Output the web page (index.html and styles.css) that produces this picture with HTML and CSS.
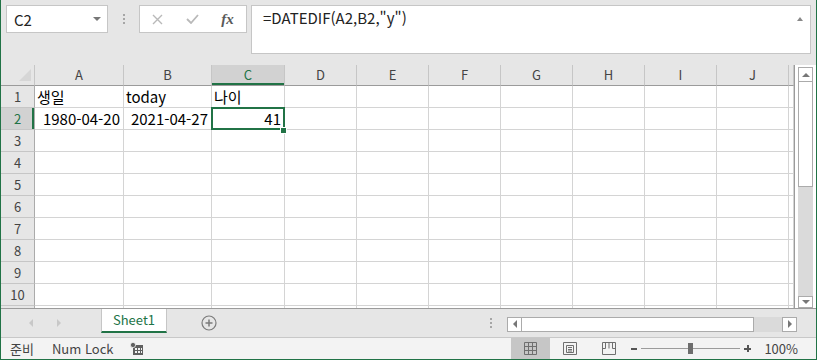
FILE: index.html
```html
<!DOCTYPE html>
<html lang="ko">
  <head>
    <meta charset="UTF-8" />
    <meta name="viewport" content="width=device-width, initial-scale=1.0" />
    <title>통합 문서 - DATEDIF</title>

    <link rel="stylesheet" href="styles.css">
  </head>
  <body>
    <div class="app">
      <!-- 이름 상자 + 수식 입력줄 -->
      <div class="toolbar">
        <div class="namebox"><span>C2</span><i class="caret-down"></i></div>
        <div class="grip"><b></b><b></b><b></b></div>
        <div class="fxbox">
          <span class="fxbtn">
            <svg width="11" height="11" viewBox="0 0 11 11"><path d="M1 1L10 10M10 1L1 10" stroke="#b9b9b9" stroke-width="1.4" fill="none"/></svg>
          </span>
          <span class="fxbtn">
            <svg width="13" height="10" viewBox="0 0 13 10"><path d="M1 5L5 9L12 1" stroke="#b9b9b9" stroke-width="1.8" fill="none"/></svg>
          </span>
          <span class="fxbtn fx">fx</span>
        </div>
        <div class="formula"><span>=DATEDIF(A2,B2,"y")</span><i class="caret-up"></i></div>
      </div>

      <!-- 워크시트 -->
      <div class="sheet">
        <div class="grid-wrap">
          <table class="grid">
            <colgroup>
              <col style="width:34px"><col style="width:89px"><col style="width:88px"><col style="width:73px">
              <col style="width:72px"><col style="width:72px"><col style="width:72px"><col style="width:72px">
              <col style="width:72px"><col style="width:72px"><col style="width:72px"><col style="width:5px">
            </colgroup>
            <tr class="head">
              <th class="corner"><svg width="13" height="13" viewBox="0 0 13 13"><path d="M12 0V12H0Z" fill="#d6d6d6"/></svg></th>
              <th>A</th><th>B</th><th class="sel-col">C</th><th>D</th><th>E</th><th>F</th><th>G</th><th>H</th><th>I</th><th>J</th><th></th>
            </tr>
            <tr><th>1</th><td class="kr">생일</td><td>today</td><td class="kr">나이</td><td></td><td></td><td></td><td></td><td></td><td></td><td></td><td></td></tr>
            <tr><th class="sel-row">2</th><td class="num">1980-04-20</td><td class="num">2021-04-27</td><td class="num sel">41</td><td></td><td></td><td></td><td></td><td></td><td></td><td></td><td></td></tr>
            <tr><th>3</th><td></td><td></td><td></td><td></td><td></td><td></td><td></td><td></td><td></td><td></td><td></td></tr>
            <tr><th>4</th><td></td><td></td><td></td><td></td><td></td><td></td><td></td><td></td><td></td><td></td><td></td></tr>
            <tr><th>5</th><td></td><td></td><td></td><td></td><td></td><td></td><td></td><td></td><td></td><td></td><td></td></tr>
            <tr><th>6</th><td></td><td></td><td></td><td></td><td></td><td></td><td></td><td></td><td></td><td></td><td></td></tr>
            <tr><th>7</th><td></td><td></td><td></td><td></td><td></td><td></td><td></td><td></td><td></td><td></td><td></td></tr>
            <tr><th>8</th><td></td><td></td><td></td><td></td><td></td><td></td><td></td><td></td><td></td><td></td><td></td></tr>
            <tr><th>9</th><td></td><td></td><td></td><td></td><td></td><td></td><td></td><td></td><td></td><td></td><td></td></tr>
            <tr><th>10</th><td></td><td></td><td></td><td></td><td></td><td></td><td></td><td></td><td></td><td></td><td></td></tr>
            <tr><th></th><td></td><td></td><td></td><td></td><td></td><td></td><td></td><td></td><td></td><td></td><td></td></tr>
          </table>
        </div>
        <div class="vscroll">
          <div class="sbtn"><i class="tri-up"></i></div>
          <div class="vthumb"></div>
          <div class="vtrack"></div>
          <div class="sbtn sbtn-bottom"><i class="tri-down"></i></div>
        </div>
      </div>

      <!-- 시트 탭 -->
      <div class="tabbar">
        <i class="nav nav-left"></i>
        <i class="nav nav-right"></i>
        <div class="tab">Sheet1</div>
        <svg class="addsheet" width="16" height="16" viewBox="0 0 16 16">
          <circle cx="8" cy="8" r="7" stroke="#7b7b7b" stroke-width="1.2" fill="none"/>
          <path d="M4.5 8H11.5M8 4.5V11.5" stroke="#7b7b7b" stroke-width="1.5"/>
        </svg>
        <div class="grip hgrip"><b></b><b></b><b></b></div>
        <div class="hscroll">
          <div class="sbtn"><i class="tri-left"></i></div>
          <div class="hthumb"></div>
          <div class="htrack"></div>
          <div class="sbtn"><i class="tri-right"></i></div>
        </div>
      </div>

      <!-- 상태 표시줄 -->
      <div class="status">
        <span class="ready">준비</span>
        <span class="numlock">Num Lock</span>
        <svg class="macro" width="13" height="13" viewBox="0 0 13 13">
          <rect x="3" y="3" width="10" height="10" fill="#5f5f5f"/>
          <path d="M5 6H7V8H5ZM8 6H10V8H8ZM5 9H7V11H5ZM8 9H10V11H8ZM11 6H12V8H11ZM11 9H12V11H11Z" fill="#f3f3f3"/>
          <circle cx="3" cy="3" r="2.6" fill="#5f5f5f" stroke="#f3f3f3" stroke-width="0.8"/>
        </svg>
        <div class="views">
          <span class="view active">
            <svg width="13" height="13" viewBox="0 0 13 13"><path d="M0.5 0.5H12.5V12.5H0.5ZM4.5 0.5V12.5M8.5 0.5V12.5M0.5 4.5H12.5M0.5 8.5H12.5" stroke="#6f6f6f" fill="none"/></svg>
          </span>
          <span class="view">
            <svg width="14" height="13" viewBox="0 0 14 13"><path d="M0.5 0.5H13.5V12.5H0.5ZM3.5 3.5H10.5V10.5H3.5ZM5 5.5H9M5 7.5H9M5 9H9" stroke="#6f6f6f" fill="none"/></svg>
          </span>
          <span class="view">
            <svg width="14" height="13" viewBox="0 0 14 13"><path d="M0.5 0.5H13.5V12.5H0.5ZM7 0.5V6.5M0.5 6.5H3.5V0.5M13.5 6.5H10.5V0.5" stroke="#6f6f6f" fill="none"/></svg>
          </span>
        </div>
        <span class="zminus"></span>
        <div class="ztrack"><span class="zthumb"></span></div>
        <span class="zplus"></span>
        <span class="zpct">100%</span>
      </div>
    </div>
  </body>
</html>
```

FILE: styles.css
```css
/* 기본 */
body {
  margin: 0;
  background-color: #fff;
  font-family: "Noto Sans CJK KR", "Noto Sans", sans-serif;
  color: #222;
}

/* 창 전체, 녹색 테두리 */
.app {
  width: 817px;
  height: 360px;
  box-sizing: border-box;
  border: 1px solid #217346;
  border-top: 0;
  display: flex;
  flex-direction: column;
  overflow: hidden;
}

/* 이름 상자 + 수식 입력줄 */
.toolbar {
  flex: none;
  height: 65px;
  box-sizing: border-box;
  padding: 5px 0 0 5px;
  background-color: #e6e6e6;
  display: flex;
  align-items: flex-start;
}

.namebox {
  width: 102px;
  height: 28px;
  box-sizing: border-box;
  padding: 0 6px 0 7px;
  background-color: #fff;
  border: 1px solid #c6c6c6;
  display: flex;
  align-items: center;
  justify-content: space-between;
  font-size: 15px;
}

.caret-down {
  border-left: 4px solid transparent;
  border-right: 4px solid transparent;
  border-top: 4px solid #777;
}

.grip {
  width: 31px;
  padding-top: 9px;
  display: flex;
  flex-direction: column;
  align-items: center;
  gap: 2px;
}

.grip b {
  width: 2px;
  height: 2px;
  background-color: #a6a6a6;
}

.fxbox {
  width: 108px;
  height: 28px;
  box-sizing: border-box;
  background-color: #fff;
  border: 1px solid #c6c6c6;
  display: flex;
  align-items: center;
}

.fxbtn {
  width: 35px;
  display: flex;
  justify-content: center;
}

.fx {
  font-family: "Liberation Serif", serif;
  font-style: italic;
  font-weight: bold;
  font-size: 15px;
  color: #5a5a5a;
}

.formula {
  margin-left: 4px;
  width: 560px;
  height: 49px;
  box-sizing: border-box;
  padding: 2px 7px 0 11px;
  background-color: #fff;
  border: 1px solid #c6c6c6;
  display: flex;
  justify-content: space-between;
  align-items: flex-start;
  font-size: 15px;
  line-height: 20px;
}

.caret-up {
  margin-top: 9px;
  border-left: 3px solid transparent;
  border-right: 3px solid transparent;
  border-bottom: 4px solid #888;
}

/* 워크시트 영역 */
.sheet {
  flex: none;
  height: 243px;
  display: flex;
}

.grid-wrap {
  width: 793px;
  height: 243px;
  overflow: hidden;
  border-right: 1px solid #9b9b9b;
}

.grid {
  width: 793px;
  table-layout: fixed;
  border-collapse: separate;
  border-spacing: 0;
}

.grid tr {
  height: 22px;
}

.grid tr.head {
  height: 21px;
}

.grid th {
  padding: 0;
  background-color: #e6e6e6;
  border-right: 1px solid #ababab;
  border-bottom: 1px solid #c6c6c6;
  font-weight: normal;
  font-size: 13px;
  line-height: 18px;
  color: #444;
  text-align: center;
}

.grid tr.head th {
  border-right: 1px solid #c6c6c6;
  border-bottom: 1px solid #9b9b9b;
}

.grid th.corner {
  text-align: right;
  vertical-align: bottom;
  padding: 0 2px 3px 0;
  border-right: 1px solid #ababab;
}

.grid th.corner svg {
  display: block;
  margin-left: auto;
}

.grid th.sel-col {
  background-color: #d2d2d2;
  color: #217346;
  box-shadow: inset 0 -2px #217346;
}

.grid th.sel-row {
  background-color: #d2d2d2;
  color: #217346;
  box-shadow: inset -2px 0 #217346;
}

.grid td {
  padding: 0 3px 0 2px;
  border-right: 1px solid #d4d4d4;
  border-bottom: 1px solid #d4d4d4;
  vertical-align: bottom;
  white-space: nowrap;
  overflow: hidden;
  font-size: 15px;
  line-height: 20px;
  color: #000;
}

.grid td.num {
  text-align: right;
}

/* 선택된 셀 C2 */
.grid td.sel {
  position: relative;
  overflow: visible;
}

.grid td.sel::after {
  content: "";
  position: absolute;
  left: -1px;
  top: -1px;
  right: -1px;
  bottom: -1px;
  border: 2px solid #217346;
}

.grid td.sel::before {
  content: "";
  position: absolute;
  right: -3px;
  bottom: -5px;
  width: 5px;
  height: 5px;
  background-color: #217346;
  border: 1px solid #fff;
  z-index: 1;
}

/* 세로 스크롤바 */
.vscroll {
  margin-left: 3px;
  width: 15px;
  padding-top: 2px;
  display: flex;
  flex-direction: column;
}

.sbtn {
  flex: none;
  width: 15px;
  height: 15px;
  box-sizing: border-box;
  background-color: #fff;
  border: 1px solid #ababab;
  display: flex;
  align-items: center;
  justify-content: center;
}

.sbtn-bottom {
  height: 12px;
}

.vthumb {
  flex: none;
  height: 105px;
  box-sizing: border-box;
  background-color: #fff;
  border: 1px solid #ababab;
  border-top: 0;
}

.vtrack {
  flex: 1;
  background-color: #dadada;
}

.tri-up {
  border-left: 4px solid transparent;
  border-right: 4px solid transparent;
  border-bottom: 4px solid #777;
}

.tri-down {
  border-left: 4px solid transparent;
  border-right: 4px solid transparent;
  border-top: 4px solid #777;
}

.tri-left {
  border-top: 4px solid transparent;
  border-bottom: 4px solid transparent;
  border-right: 4px solid #777;
}

.tri-right {
  border-top: 4px solid transparent;
  border-bottom: 4px solid transparent;
  border-left: 4px solid #777;
}

/* 시트 탭 */
.tabbar {
  flex: none;
  height: 29px;
  box-sizing: border-box;
  background-color: #e6e6e6;
  border-top: 1px solid #9b9b9b;
  display: flex;
  align-items: center;
}

.nav {
  border-top: 4px solid transparent;
  border-bottom: 4px solid transparent;
}

.nav-left {
  margin-left: 28px;
  border-right: 4px solid #c8c8c8;
}

.nav-right {
  margin-left: 24px;
  border-left: 4px solid #c8c8c8;
}

.tab {
  align-self: flex-start;
  margin-left: 40px;
  width: 66px;
  height: 24px;
  box-sizing: border-box;
  background-color: #fff;
  border-left: 1px solid #c6c6c6;
  border-right: 1px solid #c6c6c6;
  border-bottom: 2px solid #217346;
  text-align: center;
  font-size: 13px;
  line-height: 21px;
  color: #217346;
}

.addsheet {
  margin-left: 34px;
}

.hgrip {
  width: 2px;
  margin-left: 273px;
  padding-top: 0;
}

.hscroll {
  margin-left: 15px;
  margin-top: 2px;
  width: 290px;
  height: 15px;
  display: flex;
}

.hthumb {
  width: 232px;
  box-sizing: border-box;
  background-color: #fff;
  border: 1px solid #ababab;
  border-left: 0;
}

.htrack {
  width: 28px;
  background-color: #dadada;
}

/* 상태 표시줄 */
.status {
  flex: 1;
  background-color: #f3f3f3;
  border-top: 1px solid #c8c8c8;
  display: flex;
  align-items: center;
  font-size: 13px;
  color: #444;
}

.ready {
  margin-left: 9px;
}

.numlock {
  margin-left: 18px;
}

.macro {
  margin-left: 17px;
}

.views {
  margin-left: auto;
  align-self: stretch;
  display: flex;
}

.view {
  width: 39px;
  display: flex;
  align-items: center;
  justify-content: center;
}

.view.active {
  background-color: #c6c6c6;
}

.zminus {
  margin-left: 3px;
  width: 6px;
  height: 2px;
  background-color: #555;
}

.ztrack {
  margin-left: 4px;
  width: 99px;
  height: 1px;
  background-color: #9b9b9b;
  display: flex;
  justify-content: center;
  align-items: center;
}

.zthumb {
  width: 5px;
  height: 11px;
  background-color: #6d6d6d;
}

.zplus {
  margin-left: 4px;
  width: 7px;
  height: 7px;
  background:
    linear-gradient(#555, #555) center / 7px 2px no-repeat,
    linear-gradient(#555, #555) center / 2px 7px no-repeat;
}

.zpct {
  margin-left: 13px;
  margin-right: 18px;
}
```
